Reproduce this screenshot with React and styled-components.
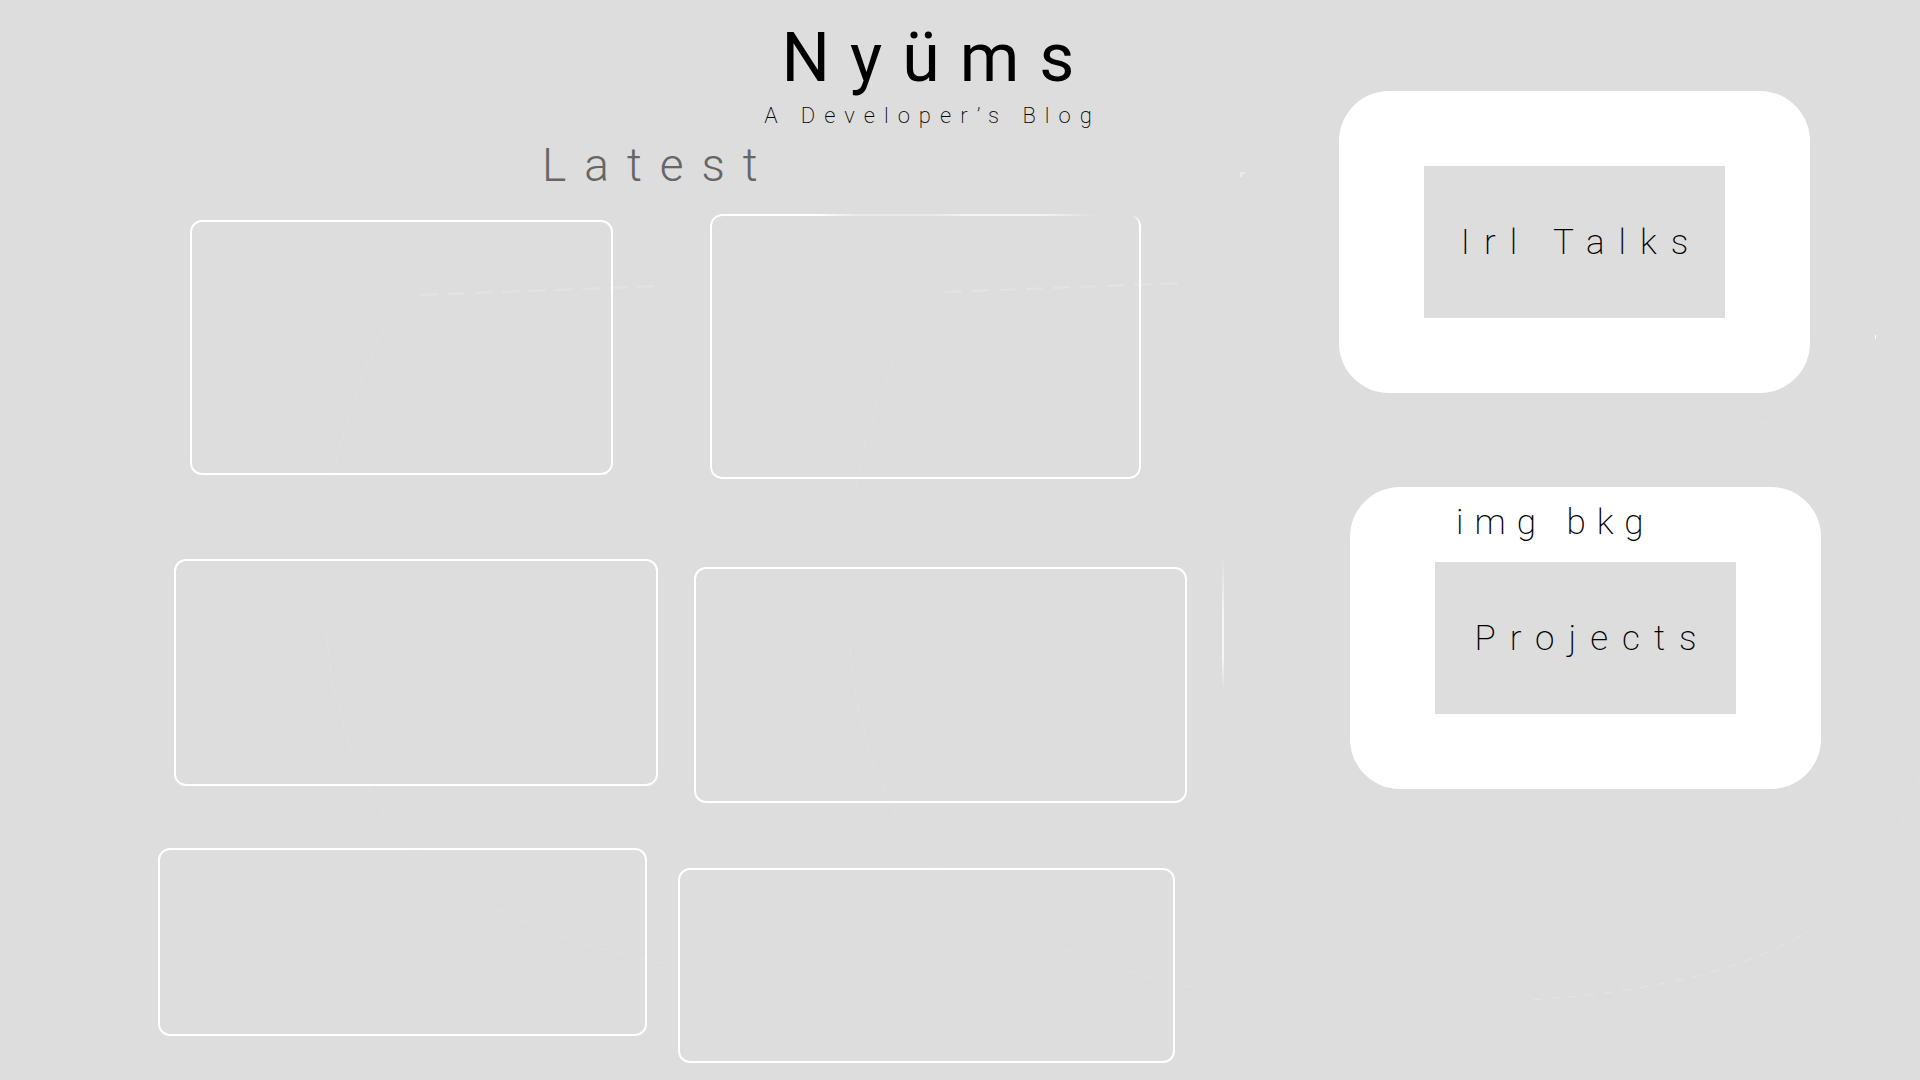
import React from 'react';
import styled, { createGlobalStyle, css } from 'styled-components';

const GlobalStyle = createGlobalStyle`
  * { box-sizing: border-box; }
  body {
    margin: 0;
    background: #ddd;
    color: #000;
    font-family: Roboto, "Liberation Sans", sans-serif;
  }
`;

const Page = styled.div`
  position: relative;
  display: grid;
  grid-template-columns: minmax(0, 1fr) 482px;
  column-gap: 152px;
  min-height: 100vh;
  padding-right: 99px;
  overflow: hidden;
`;

const Main = styled.main`
  position: relative;
  display: flex;
  flex-direction: column;
  padding: 18px 0 16px 158px;
`;

const Masthead = styled.header`
  display: flex;
  flex-direction: column;
  align-items: center;
  align-self: flex-end;
  width: 518px;
  gap: 4px;
`;

const Title = styled.h1`
  margin: 0;
  padding-left: 20px;
  font-size: 68px;
  line-height: 80px;
  font-weight: 400;
  letter-spacing: 20px;
`;

const Tagline = styled.p`
  margin: 0;
  padding-left: 9px;
  font-size: 22px;
  line-height: 28px;
  font-weight: 200;
  letter-spacing: 9px;
  white-space: nowrap;
`;

const SectionTitle = styled.h2`
  margin: 7px 0 21px;
  padding-left: 384px;
  color: #666;
  font-size: 46px;
  line-height: 56px;
  font-weight: 300;
  letter-spacing: 18px;
`;

const Posts = styled.section`
  display: grid;
  grid-template-columns: 500fr 509fr;
  column-gap: 20px;
  align-items: start;
`;

const Column = styled.div`
  display: flex;
  flex-direction: column;
  padding-top: ${(p) => p.$drop}px;
`;

const Card = styled.article`
  height: ${(p) => p.$height}px;
  margin: 0 ${(p) => p.$right}px ${(p) => p.$below}px ${(p) => p.$left}px;
  border: 2px solid #fff;
  border-radius: 12px;
  ${(p) =>
    p.$faded &&
    css`
      mask:
        linear-gradient(90deg, #000 25%, rgba(0, 0, 0, 0.35) 34%, rgba(0, 0, 0, 0.35) 52%,
          rgba(0, 0, 0, 0.7) 60%, rgba(0, 0, 0, 0.7) 76%, transparent 90%, transparent 98%, #000 100%)
          top / 100% 8px no-repeat,
        linear-gradient(#000, #000) bottom / 100% calc(100% - 8px) no-repeat;
    `}
`;

const Side = styled.nav`
  position: relative;
  display: flex;
  flex-direction: column;
  gap: 94px;
  padding-top: 91px;
`;

const Panel = styled.a`
  display: grid;
  grid-template: 75px 152px 75px / 85px 301px 85px;
  align-self: ${(p) => p.$align};
  border-radius: 50px;
  background: #fff;
  color: inherit;
  font-size: 35px;
  font-weight: 200;
  letter-spacing: 14px;
  text-decoration: none;
  white-space: nowrap;
`;

const Caption = styled.span`
  grid-area: 1 / 1 / 2 / 4;
  padding-left: 106px;
  line-height: 72px;
  letter-spacing: 11px;
`;

const Label = styled.span`
  grid-area: 2 / 2;
  display: flex;
  align-items: center;
  justify-content: center;
  padding-left: 14px;
  background: #ddd;
`;

const Traces = styled.svg`
  position: absolute;
  inset: 0;
  width: 100%;
  height: 100%;
  pointer-events: none;
`;

const leftCards = [
  { $left: 32, $right: 45, $height: 255, $below: 84 },
  { $left: 16, $right: 0, $height: 227, $below: 62 },
  { $left: 0, $right: 11, $height: 188, $below: 0 },
];

const rightCards = [
  { $left: 32, $right: 46, $height: 265, $below: 88, $faded: true },
  { $left: 16, $right: 0, $height: 236, $below: 65 },
  { $left: 0, $right: 12, $height: 195, $below: 0 },
];

export default function App() {
  return (
    <Page>
      <GlobalStyle />
      <Traces viewBox="0 0 1920 1080" fill="none" aria-hidden="true">
        <defs>
          <linearGradient id="glint" x1="0" y1="555" x2="0" y2="690" gradientUnits="userSpaceOnUse">
            <stop offset="0" stopColor="#fff" stopOpacity="0" />
            <stop offset="0.45" stopColor="#fff" stopOpacity="0.75" />
            <stop offset="0.75" stopColor="#fff" stopOpacity="0.75" />
            <stop offset="1" stopColor="#fff" stopOpacity="0" />
          </linearGradient>
        </defs>
        <g stroke="#e3e3e3" strokeWidth="2" strokeDasharray="17 10">
          <path d="M421 295 L660 286" />
          <path d="M945 292 L1183 283" />
        </g>
        <g stroke="#e2e2e2" strokeWidth="1" strokeDasharray="9 5">
          <path d="M386 325 Q348 395 332 486" />
          <path d="M327 636 Q334 735 387 820 Q458 922 670 965" />
          <path d="M913 323 Q872 395 855 492" />
          <path d="M850 648 Q858 745 899 820 Q975 945 1205 990" />
          <path d="M1330 378 L1345 398" />
          <path d="M1745 428 Q1795 414 1833 394" />
          <path d="M1800 936 Q1880 885 1920 778" />
        </g>
        <path d="M1532 1000 Q1710 988 1800 936" stroke="#e5e5e5" strokeWidth="1" strokeDasharray="9 9" />
        <rect x="1222" y="555" width="2" height="135" fill="url(#glint)" />
        <path d="M1241 177 V173 H1245" stroke="#ececec" strokeWidth="2" />
        <rect x="1875" y="335" width="1" height="4" fill="#fff" />
      </Traces>
      <Main>
        <Masthead>
          <Title>Nyüms</Title>
          <Tagline>A Developer’s Blog</Tagline>
        </Masthead>
        <SectionTitle>Latest</SectionTitle>
        <Posts>
          <Column $drop={6}>
            {leftCards.map((card) => (
              <Card key={card.$left} {...card} />
            ))}
          </Column>
          <Column $drop={0}>
            {rightCards.map((card) => (
              <Card key={card.$left} {...card} />
            ))}
          </Column>
        </Posts>
      </Main>
      <Side>
        <Panel href="#irl-talks" $align="flex-start">
          <Label>Irl Talks</Label>
        </Panel>
        <Panel href="#projects" $align="flex-end">
          <Caption>img bkg</Caption>
          <Label>Projects</Label>
        </Panel>
      </Side>
    </Page>
  );
}
